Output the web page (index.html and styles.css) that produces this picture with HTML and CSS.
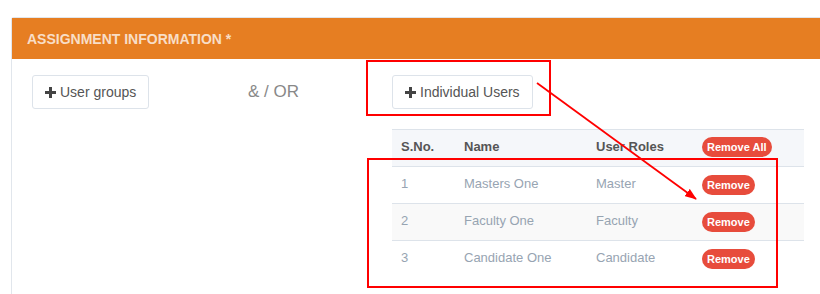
FILE: index.html
```html
<!DOCTYPE html>
<html>
    <head>
        <meta charset="utf-8">
        <title>Assignment information</title>
        <link rel="stylesheet" href="styles.css">
    </head>
    <body>
        <!-- panel -->
        <div class="panel">
            <div class="panel-heading">Assignment Information *</div>
            <div class="panel-body">
                <div class="assign-col">
                    <a class="btn" href="javascript:void(0)"><span class="plus"></span>User groups</a>
                </div>
                <div class="assign-or">&amp; / OR</div>
                <div class="assign-col">
                    <a class="btn" href="javascript:void(0)"><span class="plus"></span>Individual Users</a>

                    <table class="user-table">
                        <thead>
                            <tr>
                                <th class="c-no">S.No.</th>
                                <th class="c-name">Name</th>
                                <th class="c-role">User Roles</th>
                                <th class="c-act"><span class="badge">Remove All</span></th>
                            </tr>
                        </thead>
                        <tbody>
                            <tr>
                                <td>1</td>
                                <td>Masters One</td>
                                <td>Master</td>
                                <td><span class="badge">Remove</span></td>
                            </tr>
                            <tr>
                                <td>2</td>
                                <td>Faculty One</td>
                                <td>Faculty</td>
                                <td><span class="badge">Remove</span></td>
                            </tr>
                            <tr>
                                <td>3</td>
                                <td>Candidate One</td>
                                <td>Candidate</td>
                                <td><span class="badge">Remove</span></td>
                            </tr>
                        </tbody>
                    </table>
                </div>
            </div>
        </div>

        <!-- annotation marks drawn over the screenshot -->
        <svg class="marks" width="820" height="294" viewBox="0 0 820 294">
            <defs>
                <marker id="head" markerWidth="12" markerHeight="9" refX="11" refY="4.5" orient="auto" markerUnits="userSpaceOnUse">
                    <path d="M0,0 L12,4.5 L0,9 Z" fill="#f00"/>
                </marker>
            </defs>
            <rect x="367" y="61" width="183" height="54" fill="none" stroke="#f00" stroke-width="2"/>
            <rect x="368" y="159" width="409" height="128" fill="none" stroke="#f00" stroke-width="2"/>
            <line x1="537" y1="83" x2="696" y2="199" stroke="#f00" stroke-width="1.8" marker-end="url(#head)"/>
        </svg>
    </body>
</html>
```

FILE: styles.css
```css
*{
    margin: 0px;
    padding: 0px;
    box-sizing: border-box;
}
body{
    background-color: #fff;
    font-family: "Liberation Sans", Arial, sans-serif;
    overflow: hidden;
}

/* panel */
.panel{
    width: 840px;
    height: 277px;
    margin: 17px 0px 0px 11px;
    border: 1px solid #e1e6ec;
    border-bottom: none;
    border-radius: 3px 3px 0px 0px;
}
.panel-heading{
    height: 41px;
    line-height: 42px;
    padding-left: 15px;
    background-color: #e67e22;
    color: rgba(255, 255, 255, 0.75);
    font-size: 14px;
    font-weight: bold;
    text-transform: uppercase;
}
.panel-body{
    display: grid;
    grid-template-columns: 216px 144px 1fr;
    padding: 16px 0px 0px 20px;
}

/* buttons */
.btn{
    display: inline-flex;
    align-items: center;
    height: 34px;
    padding: 0px 12px;
    border: 1px solid #dde3ea;
    border-radius: 3px;
    color: #555;
    font-size: 14px;
    text-decoration: none;
    background-color: #fff;
}
.plus{
    position: relative;
    width: 11px;
    height: 11px;
    margin-right: 4px;
}
.plus::before,
.plus::after{
    content: "";
    position: absolute;
    background-color: #444;
}
.plus::before{
    left: 0px;
    top: 4px;
    width: 11px;
    height: 3px;
}
.plus::after{
    left: 4px;
    top: 0px;
    width: 3px;
    height: 11px;
}
.assign-or{
    height: 34px;
    line-height: 34px;
    color: #888;
    font-size: 17px;
}

/* table */
.user-table{
    margin-top: 20px;
    width: 412px;
    border-collapse: collapse;
    font-size: 13px;
}
.user-table th,
.user-table td{
    height: 37px;
    padding: 0px 0px 3px 9px;
    text-align: left;
    border-top: 1px solid #dde3ea;
}
.user-table th{
    background-color: #f5f7fa;
    color: #555;
    font-weight: bold;
}
.user-table td{
    color: #97a4b2;
}
.user-table tbody tr:nth-child(2) td{
    background-color: #f9f9f9;
}
.c-no{ width: 63px; }
.c-name{ width: 132px; }
.c-role{ width: 106px; }
.user-table td:last-child{
    padding-bottom: 1px;
}
.badge{
    display: inline-block;
    padding: 3px 5px;
    border-radius: 10px;
    background-color: #e74c3c;
    color: #fff;
    font-size: 11px;
    font-weight: bold;
    line-height: 14px;
}

/* annotation marks */
.marks{
    position: absolute;
    left: 0px;
    top: 0px;
}
```
